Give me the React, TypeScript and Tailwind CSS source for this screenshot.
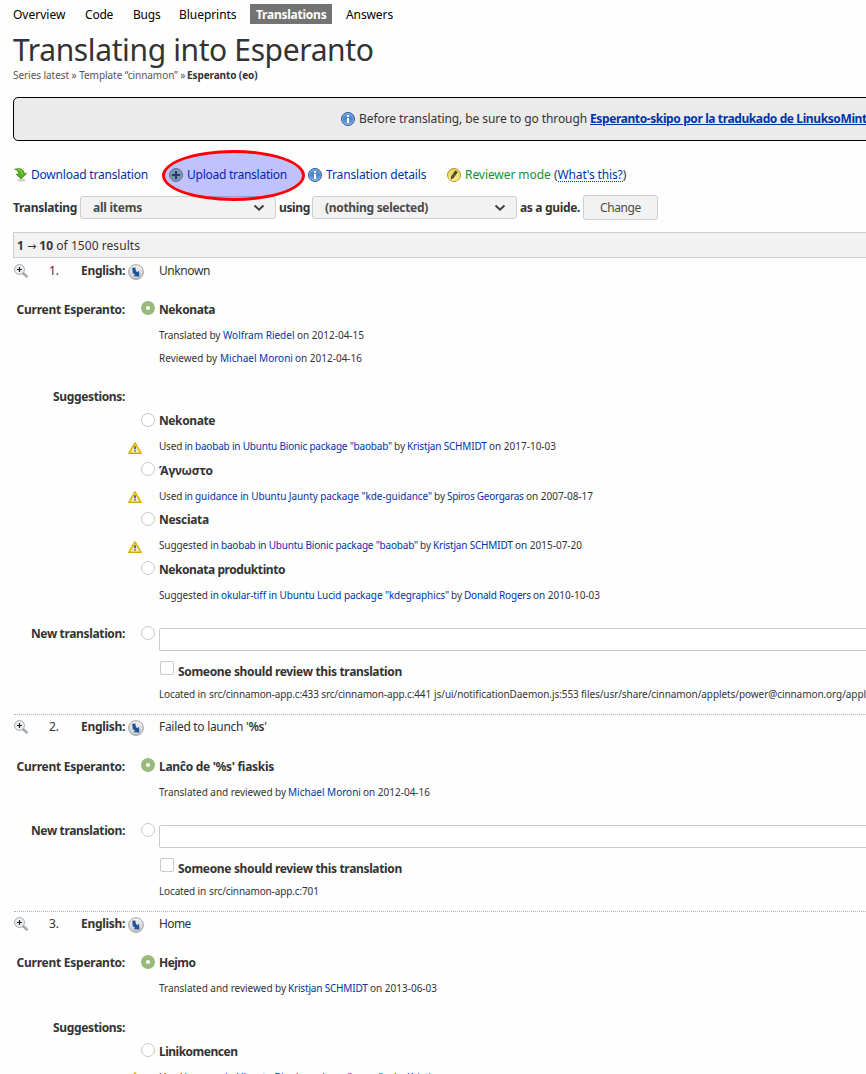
import type { ReactNode } from "react";

const LINK = "text-[#0033aa]";

function InfoIcon() {
  return (
    <svg width="14" height="14" viewBox="0 0 14 14" className="block shrink-0">
      <defs>
        <linearGradient id="info" x1="0" y1="0" x2="0" y2="1">
          <stop offset="0" stopColor="#6a9fdb" />
          <stop offset="0.5" stopColor="#4a84c8" />
          <stop offset="1" stopColor="#7fb0e6" />
        </linearGradient>
      </defs>
      <circle cx="7" cy="7" r="6.5" fill="url(#info)" stroke="#2c5a96" />
      <circle cx="7" cy="7" r="5.5" fill="none" stroke="#9dc1ea" strokeOpacity="0.5" />
      <path d="M6 3h2v2H6zM6 6h2v5H6z" fill="#fff" />
    </svg>
  );
}

function DownloadIcon() {
  return (
    <svg width="14" height="14" viewBox="0 0 14 14" className="block shrink-0">
      <ellipse cx="7.5" cy="12.3" rx="4" ry="1.2" fill="#ccc" />
      <path
        d="M.8 1.200C5.500-.2 9.800 1 10.100 5.400h2.400L7.200 11 2.100 6.200h2.700C4.800 3.800 3.400 2.200.8 1.200z"
        fill="#57b318"
        stroke="#3a8a10"
        strokeWidth="0.8"
      />
      <path d="M4 1.700c2.700.2 4.200 2 4.200 4.800" fill="none" stroke="#8fdc50" />
    </svg>
  );
}

function AddIcon() {
  return (
    <svg width="14" height="14" viewBox="0 0 14 14" className="block shrink-0">
      <defs>
        <linearGradient id="add" x1="0" y1="0" x2="0" y2="1">
          <stop offset="0" stopColor="#a5c8a0" />
          <stop offset="1" stopColor="#9cc494" />
        </linearGradient>
      </defs>
      <circle cx="7" cy="7" r="6.5" fill="url(#add)" stroke="#7c9478" />
      <path d="M6 3h2v3h3v2H8v3H6V8H3V6h3z" fill="#3c4a3c" />
    </svg>
  );
}

function PencilIcon() {
  return (
    <svg width="14" height="14" viewBox="0 0 14 14" className="block shrink-0">
      <defs>
        <linearGradient id="pencil" x1="0" y1="0" x2="0" y2="1">
          <stop offset="0" stopColor="#e3d25a" />
          <stop offset="1" stopColor="#fbf08c" />
        </linearGradient>
      </defs>
      <circle cx="7" cy="7" r="6.5" fill="url(#pencil)" stroke="#b59a2a" />
      <path d="M8.300 2.500l2.500 1.600-4.200 6-2.700 1.500.2-3z" fill="#46442a" />
      <path d="M7.500 6l-2 3.200" stroke="#8d8a5a" strokeWidth="0.7" />
    </svg>
  );
}

function ZoomIcon() {
  return (
    <svg width="15" height="15" viewBox="0 0 15 15" className="block shrink-0">
      <path d="M9.500 9.500l3.300 3" stroke="#999" strokeWidth="2.400" strokeLinecap="round" />
      <path d="M10.500 10.300l2.500 2.300" stroke="#d5d5d5" strokeWidth="0.900" />
      <circle cx="5.500" cy="5.500" r="4.900" fill="#eef1f5" stroke="#a5a5a5" />
      <path d="M5.500 3v5M3 5.500h5" stroke="#222" strokeWidth="1.200" />
    </svg>
  );
}

function CopyIcon() {
  return (
    <svg width="16" height="16" viewBox="0 0 16 16" className="block shrink-0">
      <defs>
        <linearGradient id="copy" x1="0" y1="0" x2="0" y2="1">
          <stop offset="0" stopColor="#f4f4f4" />
          <stop offset="1" stopColor="#c4c4c4" />
        </linearGradient>
      </defs>
      <circle cx="8" cy="8" r="7.4" fill="url(#copy)" stroke="#999" strokeWidth="0.9" />
      <path d="M4.200 3.800l3.100-.2.700 3.600 1.700.9 1.200-1.300.6 5.700-5.700-.2 1.300-1.600-2.300-1.700z" fill="#1d569c" />
    </svg>
  );
}

function WarningIcon() {
  return (
    <svg width="14" height="12" viewBox="0 0 14 12" className="block">
      <path d="M7 1l6 10.300H1z" fill="#ece9dc" stroke="#dcb80c" strokeWidth="1.700" strokeLinejoin="round" />
      <path d="M.3 11.700h13.400" stroke="#b8960a" strokeWidth="0.600" />
      <path d="M6.300 4.300h1.500v3H6.300zM6.300 8.300h1.500v1.300H6.300z" fill="#3a4152" />
    </svg>
  );
}

function Chevron() {
  return (
    <svg width="12" height="8" viewBox="0 0 12 8" className="block">
      <path d="M1.500 1.500L6 5.800l4.500-4.300" fill="none" stroke="#3c3c3c" strokeWidth="1.900" />
    </svg>
  );
}

function Radio({ checked = false, low = false }: { checked?: boolean; low?: boolean }) {
  return (
    <span
      className={`${low ? "mt-[3px]" : "mt-[2px]"} flex size-[14px] shrink-0 items-center justify-center rounded-full ${
        checked ? "bg-[#9aba7c]" : "border border-[#c9c9c9] bg-white"
      }`}
    >
      {checked && <span className="size-1 rounded-full bg-white" />}
    </span>
  );
}

type RowProps = { h: string; label?: string; labelTrack?: string; mark?: ReactNode; children?: ReactNode };

function Row({ h, label, labelTrack = "tracking-[-0.25px]", mark, children }: RowProps) {
  return (
    <div className={`flex ${h}`}>
      <div className={`w-[125px] shrink-0 text-right font-bold ${labelTrack}`}>{label}</div>
      <div className="flex w-[34px] shrink-0 justify-start">{mark}</div>
      <div>{children}</div>
    </div>
  );
}

function Option({
  text,
  label,
  checked,
  low,
  h = "h-[26px]",
  track = "tracking-[-0.4px]",
}: {
  text: ReactNode;
  label?: string;
  checked?: boolean;
  low?: boolean;
  h?: string;
  track?: string;
}) {
  return (
    <Row
      h={h}
      label={label}
      mark={
        <span className="ml-4">
          <Radio checked={checked} low={low} />
        </span>
      }
    >
      <span className={`font-bold ${track}`}>{text}</span>
    </Row>
  );
}

type Part = [text: string, size: string, link?: boolean];

function Meta({ h, parts, warn, warnHigh }: { h: string; parts: Part[]; warn?: boolean; warnHigh?: boolean }) {
  return (
    <Row
      h={h}
      mark={
        warn && (
          <span className={`ml-[3px] ${warnHigh ? "mt-[5px]" : "mt-[6px]"}`}>
            <WarningIcon />
          </span>
        )
      }
    >
      <div className="flex text-[10px] leading-[20px]">
        {parts.map(([text, size, link], i) => (
          <span key={i} className={`shrink-0 ${size} ${link ? LINK : ""}`}>
            {text}
          </span>
        ))}
      </div>
    </Row>
  );
}

function English({ n, h, children }: { n: string; h: string; children: ReactNode }) {
  return (
    <div className={`flex ${h}`}>
      <div className="w-[35px] shrink-0 pt-[4px] pl-[14px]">
        <ZoomIcon />
      </div>
      <div className="w-[24px] shrink-0 text-right">{n}</div>
      <div className="w-[66px] shrink-0 text-right font-bold tracking-[-0.31px]">English:</div>
      <div className="w-[34px] shrink-0 pt-[4px] pl-[3px]">
        <CopyIcon />
      </div>
      <div>{children}</div>
    </div>
  );
}

function Divider() {
  return <div className="ml-[14px] border-t border-dotted border-[#b5b5b5]" />;
}

function NewTranslation({ located }: { located: Part[] }) {
  return (
    <>
      <div className="flex h-[38px]">
        <div className="w-[125px] shrink-0 text-right font-bold tracking-[-0.35px]">New translation:</div>
        <div className="w-[34px] shrink-0 pl-4">
          <Radio low />
        </div>
        <div className="mt-[5px] h-[23px] w-[760px] shrink-0 rounded-[2px] border border-[#c9c9c9] bg-white" />
      </div>
      <div className="flex h-[23px] pl-[160px]">
        <span className="size-[14px] shrink-0 rounded-[2px] border border-[#c9c9c9] bg-white" />
        <span className="ml-1 font-bold tracking-[-0.335px]">Someone should review this translation</span>
      </div>
      <Meta h="h-[30px]" parts={located} />
    </>
  );
}

function Select({ width, children }: { width: string; children: ReactNode }) {
  return (
    <div
      className={`mt-[-1px] flex h-[23px] ${width} shrink-0 items-start justify-between rounded-[3px] border border-[#cdcdcd] bg-[#f2f2f2] pr-[10px] pl-3 text-[#4a4a4a]`}
    >
      {children}
      <span className="mt-[7px]">
        <Chevron />
      </span>
    </div>
  );
}

export default function App() {
  return (
    <div className="relative h-[1074px] w-[866px] overflow-hidden bg-[#fefefe] pt-1 font-['Noto_Sans',sans-serif] text-[12px] leading-[22px] whitespace-nowrap text-[#333]">
      <nav className="flex h-[25px] pl-[13px] text-black">
        <a className="w-[72px]">Overview</a>
        <a className="w-[48px] tracking-[-0.2px]">Code</a>
        <a className="w-[46px] tracking-[-0.2px]">Bugs</a>
        <a className="w-[71px] tracking-[-0.05px]">Blueprints</a>
        <a className="mr-[14px] h-5 w-[82px] bg-[#737373] pl-[6px] font-bold tracking-[-0.24px] text-white">Translations</a>
        <a className="tracking-[-0.1px]">Answers</a>
      </nav>

      <h1 className="h-9 pl-[13px] text-[30px] leading-[42px] tracking-[-0.375px]">Translating into Esperanto</h1>
      <div className="flex h-8 pl-[13px] text-[10px] leading-[20px]">
        <span className="w-[174px] tracking-[-0.05px] text-[#555]">Series latest » Template “cinnamon” »</span>
        <b className="tracking-[-0.1px]">Esperanto (eo)</b>
      </div>

      <div className="ml-[13px] flex h-[44px] w-[900px] rounded-[5px] border border-black bg-[#ebebeb] pt-[10px] pl-[327px]">
        <span className="mt-1">
          <InfoIcon />
        </span>
        <span className="ml-1 w-[231px] shrink-0 tracking-[-0.08px]">Before translating, be sure to go through</span>
        <a className={`font-bold tracking-[-0.392px] underline ${LINK}`}>Esperanto-skipo por la tradukado de LinuksoMint</a>
      </div>

      <div className={`flex h-8 pt-[23px] pl-[14px] ${LINK}`}>
        <span className="mt-1 w-[17px]">
          <DownloadIcon />
        </span>
        <a className="w-[138px] tracking-[-0.205px]">Download translation</a>
        <span className="mt-1 w-[18px]">
          <AddIcon />
        </span>
        <a className="w-[121px] tracking-[-0.256px]">Upload translation</a>
        <span className="mt-1 w-[18px]">
          <InfoIcon />
        </span>
        <a className="w-[121px] tracking-[-0.13px]">Translation details</a>
        <span className="mt-1 w-[18px]">
          <PencilIcon />
        </span>
        <a className="w-[89px] tracking-[-0.07px] text-[#0b9431]">Reviewer mode</a>
        <span className="text-[#333]">(</span>
        <a className="h-[18px] border-b border-dotted border-[#0033aa] tracking-[-0.157px]">What's this?</a>
        <span className="text-[#333]">)</span>
      </div>

      <div className="mt-6 flex h-[35px] pl-[13px] font-bold">
        <span className="w-[67px] shrink-0 tracking-[-0.309px]">Translating</span>
        <Select width="w-[196px]">
          <span className="tracking-[-0.238px]">all items</span>
        </Select>
        <span className="w-9 shrink-0 pl-[3px] tracking-[-0.35px]">using</span>
        <Select width="w-[205px]">
          <span className="tracking-[-0.312px]">(nothing selected)</span>
        </Select>
        <span className="w-[66px] shrink-0 pl-[3px] tracking-[-0.339px]">as a guide.</span>
        <button className="mt-[-2px] h-[25px] w-[75px] rounded-[3px] border border-[#cdcdcd] bg-[#f2f2f2] pt-px leading-[20px] font-normal tracking-[-0.383px] text-[#4a4a4a]">
          Change
        </button>
      </div>

      <div className="ml-[13px] h-[26px] w-[900px] border border-[#cdcdcd] bg-[#f2f2f2] pt-[2px] pl-[3px]">
        <b>1</b> <span className="font-['DejaVu_Sans'] text-[11px] leading-[10px]">→</span> <b>10</b>{" "}
        <span className="tracking-[0.06px]">of 1500 results</span>
      </div>

      <section className="pt-[2px]">
        <English n="1." h="h-[39px]">
          <span className="tracking-[-0.41px]">Unknown</span>
        </English>
        <Option label="Current Esperanto:" text="Nekonata" checked />
        <Meta
          h="h-[23px]"
          parts={[
            ["Translated by", "w-[64px] tracking-[-0.12px]"],
            ["Wolfram Riedel", "w-[74px]", true],
            ["on 2012-04-15", ""],
          ]}
        />
        <Meta
          h="h-[38px]"
          parts={[
            ["Reviewed by", "w-[61px]"],
            ["Michael Moroni", "w-[75px]", true],
            ["on 2012-04-16", ""],
          ]}
        />
        <Row h="h-[24px]" label="Suggestions:" labelTrack="tracking-[-0.36px]" />
        <Option text="Nekonate" low />
        <Meta
          warn
          h="h-[24px]"
          parts={[
            ["Used in", "w-[36px] tracking-[-0.2px]"],
            ['baobab in Ubuntu Bionic package "baobab"', "w-[199px] tracking-[-0.2px]", true],
            ["by", "w-[13px]"],
            ["Kristjan SCHMIDT", "w-[82px] tracking-[-0.18px]", true],
            ["on 2017-10-03", ""],
          ]}
        />
        <Option text="Άγνωστο" track="tracking-[-0.15px]" />
        <Meta
          warn
          warnHigh
          h="h-[23px]"
          parts={[
            ["Used in", "w-[36px] tracking-[-0.2px]"],
            ['guidance in Ubuntu Jaunty package "kde-guidance"', "w-[239px] tracking-[-0.085px]", true],
            ["by", "w-[13px]"],
            ["Spiros Georgaras", "w-[79px] tracking-[-0.26px]", true],
            ["on 2007-08-17", ""],
          ]}
        />
        <Option text="Nesciata" low track="tracking-[-0.3px]" />
        <Meta
          warn
          h="h-[24px]"
          parts={[
            ["Suggested in", "w-[62px] tracking-[-0.12px]"],
            ['baobab in Ubuntu Bionic package "baobab"', "w-[199px] tracking-[-0.2px]", true],
            ["by", "w-[13px]"],
            ["Kristjan SCHMIDT", "w-[82px] tracking-[-0.18px]", true],
            ["on 2015-07-20", ""],
          ]}
        />
        <Option text="Nekonata produktinto" track="tracking-[-0.435px]" />
        <Meta
          h="h-[38px]"
          parts={[
            ["Suggested in", "w-[62px] tracking-[-0.12px]"],
            ['okular-tiff in Ubuntu Lucid package "kdegraphics"', "w-[230px] tracking-[-0.108px]", true],
            ["by", "w-[13px]"],
            ["Donald Rogers", "w-[69px] tracking-[-0.2px]", true],
            ["on 2010-10-03", ""],
          ]}
        />
        <NewTranslation
          located={[
            ["Located in", "w-[50px] tracking-[-0.146px]"],
            ["src/cinnamon-app.c:433 src/cinnamon-app.c:441", "w-[225px] tracking-[-0.13px]"],
            ["js/ui/notificationDaemon.js:553", "w-[147px] tracking-[-0.07px]"],
            ["files/usr/share/cinnamon/applets/power@cinnamon.org/applet.js", "tracking-[-0.072px]"],
          ]}
        />
      </section>

      <Divider />

      <section className="pt-px">
        <English n="2." h="h-[40px]">
          <span className="tracking-[-0.3px]">
            Failed to launch '<span className="font-semibold">%s</span>'
          </span>
        </English>
        <Option label="Current Esperanto:" text="Lanĉo de '%s' fiaskis" checked track="tracking-[-0.3px]" />
        <Meta
          h="h-[38px]"
          parts={[
            ["Translated and reviewed by", "w-[129px] tracking-[-0.04px]"],
            ["Michael Moroni", "w-[75px]", true],
            ["on 2012-04-16", ""],
          ]}
        />
        <NewTranslation
          located={[
            ["Located in", "w-[50px] tracking-[-0.146px]"],
            ["src/cinnamon-app.c:701", "tracking-[-0.13px]"],
          ]}
        />
      </section>

      <Divider />

      <section className="pt-px">
        <English n="3." h="h-[39px]">
          <span className="tracking-[-0.6px]">Home</span>
        </English>
        <Option label="Current Esperanto:" text="Hejmo" checked low track="tracking-[-0.55px]" />
        <Meta
          h="h-[39px]"
          parts={[
            ["Translated and reviewed by", "w-[129px] tracking-[-0.04px]"],
            ["Kristjan SCHMIDT", "w-[82px] tracking-[-0.18px]", true],
            ["on 2013-06-03", ""],
          ]}
        />
        <Row h="h-[24px]" label="Suggestions:" labelTrack="tracking-[-0.36px]" />
        <Option text="Linikomencen" track="tracking-[-0.5px]" />
        <Meta
          warn
          warnHigh
          h="h-[24px]"
          parts={[
            ["Used in", "w-[36px] tracking-[-0.2px]"],
            ['menu in Ubuntu Bionic package "menu"', "w-[199px]", true],
            ["by", "w-[13px]"],
            ["Kristjan", "", true],
          ]}
        />
      </section>

      <div className="absolute top-[150px] left-[162px] h-[51px] w-[143px] rounded-[50%] border-3 border-[#ff0000] bg-[#0000ff]/24" />
    </div>
  );
}
